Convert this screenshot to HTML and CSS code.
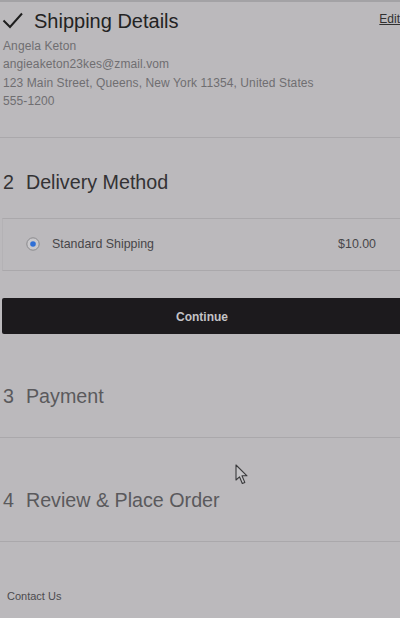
FILE: index.html
```html
<!DOCTYPE html>
<html lang="en">
<head>
<meta charset="utf-8">
<title>Checkout</title>
<link rel="stylesheet" href="styles.css">
</head>
<body>
<div class="topbar"></div>
<main class="checkout">
  <section class="step step-done">
    <div class="step-head">
      <div class="step-title">
        <svg class="check" width="22" height="20" viewBox="0 0 22 20"><polyline points="1.5,8.5 8,15 20,1.5" fill="none" stroke="#1e1e1e" stroke-width="2"/></svg>
        <h2 class="title-done">Shipping Details</h2>
      </div>
      <a class="edit" href="#">Edit</a>
    </div>
    <div class="address">
      <div>Angela Keton</div>
      <div>angieaketon23kes@zmail.vom</div>
      <div>123 Main Street, Queens, New York 11354, United States</div>
      <div>555-1200</div>
    </div>
  </section>

  <section class="step step-active">
    <h2 class="step-heading"><span class="num">2</span><span>Delivery Method</span></h2>
    <div class="option">
      <label class="option-label">
        <svg class="radio" width="14" height="14" viewBox="0 0 14 14"><circle cx="7" cy="7" r="6.2" fill="#c9c8cb" stroke="#8a898c" stroke-width="1"/><circle cx="7" cy="7" r="2.8" fill="#2f6fd6"/></svg>
        <span>Standard Shipping</span>
      </label>
      <span class="price">$10.00</span>
    </div>
    <button class="continue" type="button">Continue</button>
  </section>

  <section class="step step-pending">
    <h2 class="step-heading muted"><span class="num">3</span><span>Payment</span></h2>
  </section>

  <section class="step step-pending">
    <h2 class="step-heading muted"><span class="num">4</span><span>Review &amp; Place Order</span></h2>
  </section>

  <footer class="footer">Contact Us</footer>
</main>
<svg class="cursor" width="16" height="22" viewBox="0 0 16 22"><path d="M1 1 L1 16 L4.5 12.8 L7.3 19.5 L9.8 18.4 L7 11.8 L12 11.8 Z" fill="#c4c3c6" stroke="#3a3a3c" stroke-width="1.1" stroke-linejoin="round"/></svg>
</body>
</html>
```

FILE: styles.css
```css
html, body {
  margin: 0;
  padding: 0;
}
body {
  background: #bbb9bc;
  font-family: "Liberation Sans", Arial, sans-serif;
  width: 400px;
  height: 618px;
  overflow: hidden;
  position: relative;
}
.topbar {
  height: 2px;
  background: #a3a2a5;
}
.checkout {
  display: flex;
  flex-direction: column;
}
.step-done {
  padding: 7px 0 26px 0;
  border-bottom: 1px solid #aaa8ab;
}
.step-head {
  display: flex;
  justify-content: space-between;
  align-items: flex-start;
}
.step-title {
  display: flex;
  align-items: center;
  gap: 10px;
  padding-left: 2px;
}
.check {
  display: block;
  margin-top: 2px;
}
.title-done {
  margin: 0;
  font-size: 20px;
  line-height: 24px;
  font-weight: normal;
  color: #232323;
}
.edit {
  font-size: 12px;
  line-height: 14px;
  color: #303030;
  text-decoration: underline;
  margin-top: 3px;
  margin-right: 0;
}
.address {
  margin-top: 4px;
  padding-left: 3px;
  font-size: 12px;
  line-height: 18.4px;
  letter-spacing: 0.1px;
  color: #6f6e71;
}
.step-heading {
  margin: 0;
  display: flex;
  gap: 12px;
  padding-left: 3px;
  font-size: 19.7px;
  line-height: 24px;
  font-weight: normal;
  color: #333234;
}
.step-heading.muted {
  color: #5a595c;
}
.step-active {
  padding-top: 32px;
}
.option {
  margin-top: 24px;
  height: 51px;
  border-top: 1px solid #aaa8ab;
  border-bottom: 1px solid #aaa8ab;
  border-left: 1px solid #b4b2b5;
  margin-left: 2px;
  display: flex;
  align-items: center;
  justify-content: space-between;
  padding: 0 24px 0 23px;
  font-size: 12.4px;
  color: #474649;
}
.option-label {
  display: flex;
  align-items: center;
  gap: 12px;
}
.radio {
  display: block;
}
.continue {
  margin: 27px 0 0 2px;
  height: 36px;
  width: 400px;
  border: none;
  border-radius: 2px;
  background: #1c1a1d;
  color: #c4c3c6;
  font-family: "Liberation Sans", Arial, sans-serif;
  font-size: 12px;
  font-weight: bold;
  padding: 3px 0 0 0;
}
.step-pending {
  padding: 50px 0 29px 0;
  border-bottom: 1px solid #aaa8ab;
}
.footer {
  padding: 47px 0 0 7px;
  font-size: 11px;
  line-height: 14px;
  color: #4c4b4e;
}
.cursor {
  position: absolute;
  left: 235px;
  top: 464px;
}
```
